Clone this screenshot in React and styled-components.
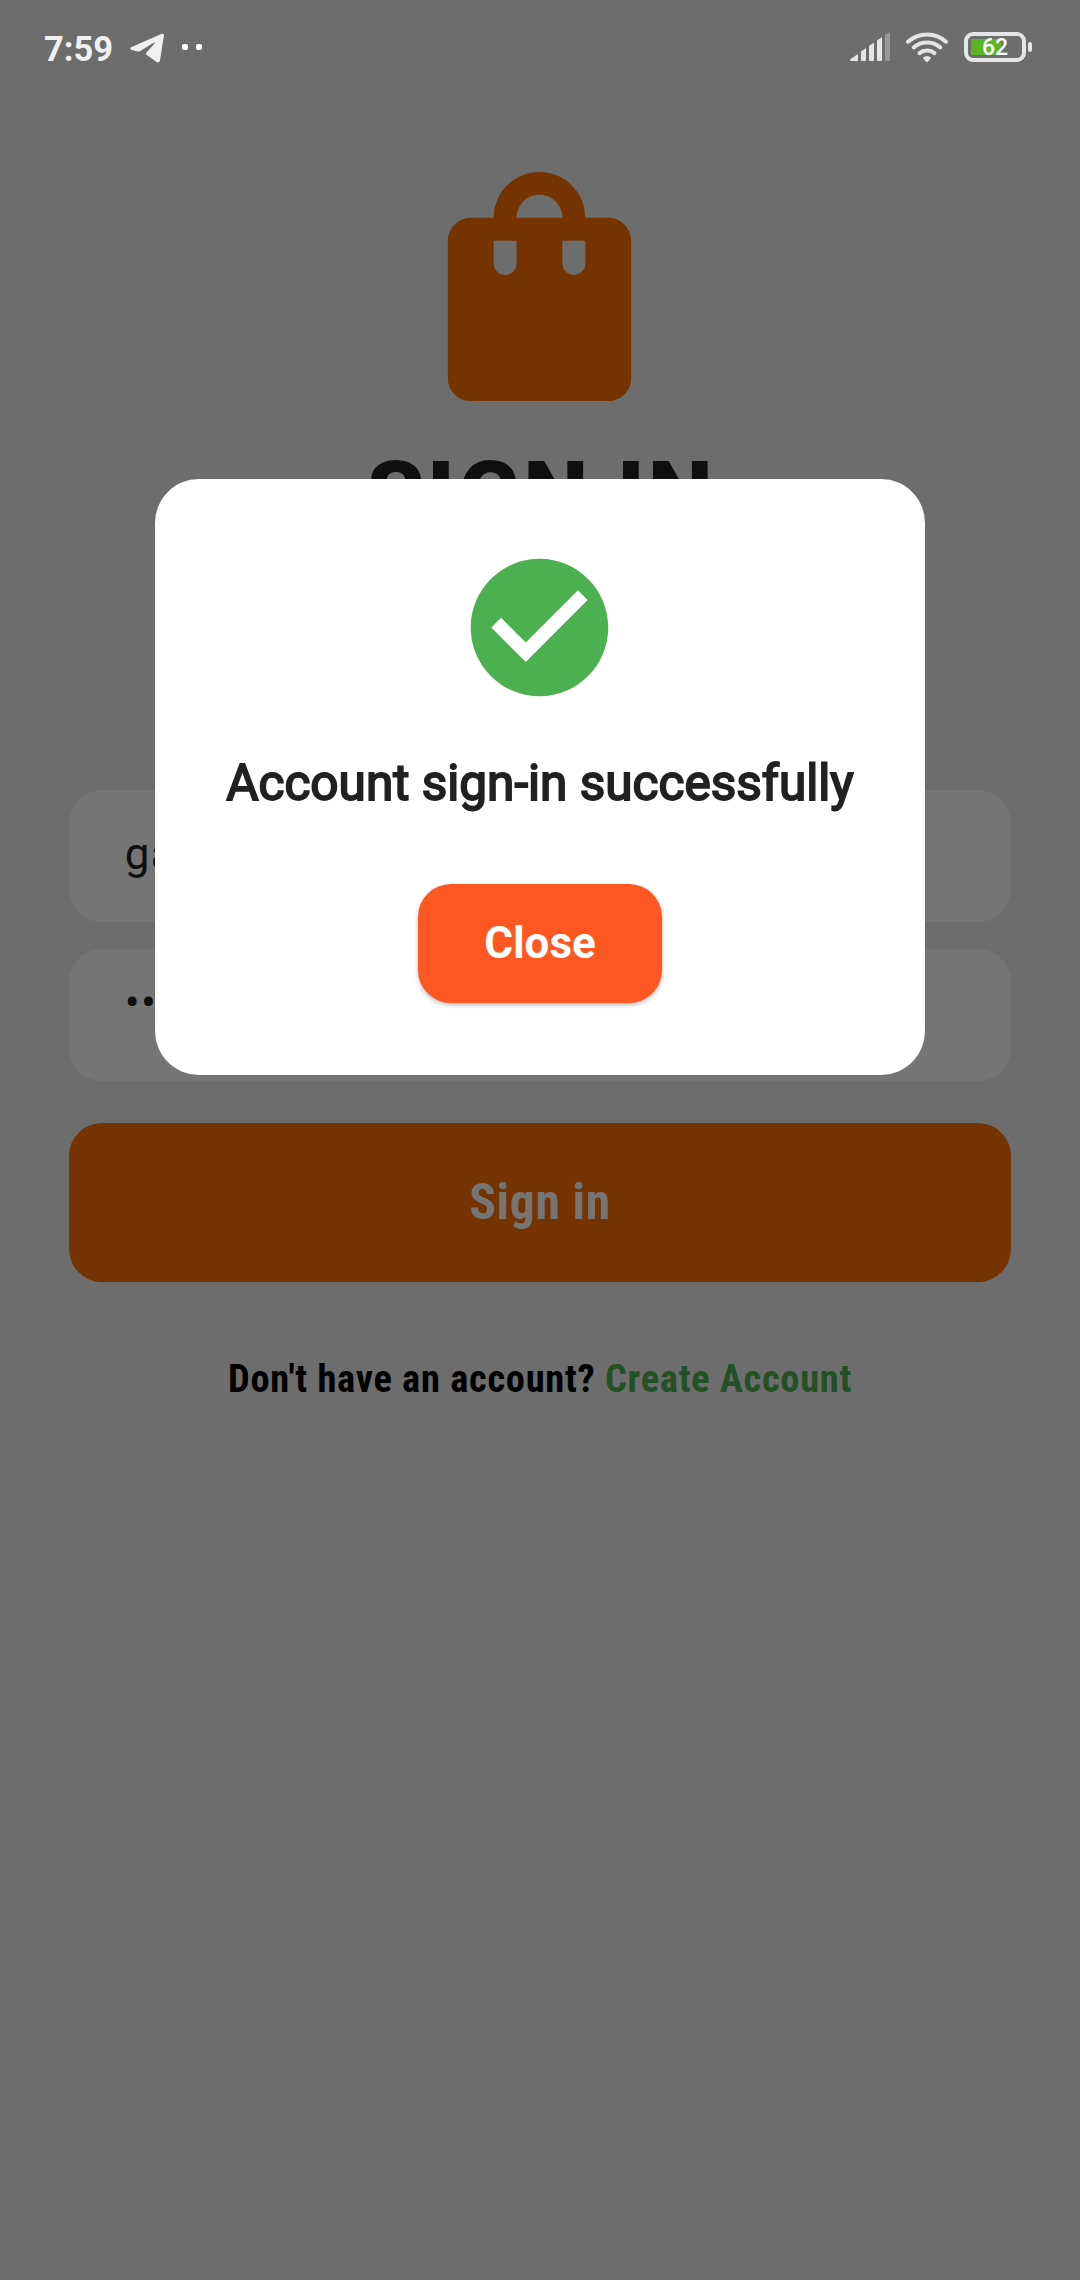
import React from "react";
import styled, { createGlobalStyle } from "styled-components";

const GlobalStyle = createGlobalStyle`
  * { box-sizing: border-box; }
  body { margin: 0; background: #6d6d6d; }
  button { font: inherit; border: 0; padding: 0; margin: 0; }
`;

const Screen = styled.div`
  position: relative;
  width: 1080px;
  height: 2280px;
  overflow: hidden;
  background: #eeeeee;
  font-family: Roboto, "Noto Sans", sans-serif;
`;

const Page = styled.main`
  display: flex;
  flex-direction: column;
  align-items: center;
  padding: 149px 68.75px 0;
`;

const BagIcon = styled.svg`
  display: block;
  width: 275px;
  height: 275px;
  margin-left: -1px;
  fill: #ff6f00;
`;

const Title = styled.h1`
  margin: 8px 0 0;
  padding-left: 2px;
  height: 128px;
  line-height: 128px;
  font-size: 92px;
  font-weight: 900;
  letter-spacing: 3px;
  color: #212121;
  white-space: nowrap;
`;

const Fields = styled.div`
  display: flex;
  flex-direction: column;
  gap: 27.5px;
  width: 100%;
  margin-top: 229.5px;
`;

const Field = styled.div`
  height: 132px;
  padding: ${(p) => p.$top}px 56px 0;
  border-radius: 33px;
  background: #ffffff;
  color: #212121;
  font-size: 44px;
  line-height: 52px;
  letter-spacing: 1.4px;
`;

const SignInButton = styled.button`
  width: 100%;
  height: 159.5px;
  margin-top: 41.5px;
  border-radius: 33px;
  background: #ff6f00;
  color: #ffffff;
  font-family: "Roboto Condensed", Roboto, sans-serif;
  font-size: 49.5px;
  font-weight: 700;
  letter-spacing: 0.7px;
`;

const Prompt = styled.p`
  margin: 72.5px 0 0;
  color: #000000;
  font-family: "Roboto Condensed", Roboto, sans-serif;
  font-size: 38.5px;
  line-height: 48px;
  font-weight: 700;
  letter-spacing: 0.7px;
  white-space: nowrap;
`;

const PromptLink = styled.span`
  color: #4caf50;
`;

const Scrim = styled.div`
  position: absolute;
  inset: 0;
  display: flex;
  flex-direction: column;
  align-items: center;
  padding-top: 478.5px;
  background: rgba(0, 0, 0, 0.54);
`;

const Dialog = styled.section`
  display: flex;
  flex-direction: column;
  align-items: center;
  width: 770px;
  height: 596.5px;
  padding-top: 66px;
  border-radius: 44px;
  background: #ffffff;
`;

const CheckIcon = styled.svg`
  display: block;
  width: 165px;
  height: 165px;
  margin-left: -1px;
  fill: #4caf50;
`;

const Message = styled.p`
  margin: 43.5px 0 0;
  height: 60px;
  line-height: 60px;
  font-size: 49.5px;
  font-weight: 400;
  -webkit-text-stroke: 1.9px #212121;
  color: #212121;
  white-space: nowrap;
`;

const CloseButton = styled.button`
  width: 244px;
  height: 118.5px;
  margin-top: 71px;
  border-radius: 33px;
  background: #ff5722;
  box-shadow: 0 2px 4px rgba(0, 0, 0, 0.28);
  color: #ffffff;
  font-size: 44px;
  font-weight: 700;
`;

const StatusBar = styled.header`
  position: absolute;
  top: 0;
  left: 0;
  display: flex;
  align-items: center;
  width: 100%;
  height: 94px;
  padding: 0 48px 0 44px;
  color: #f0f0f0;
`;

const Clock = styled.span`
  width: 86px;
  padding-top: 3px;
  font-size: 34.5px;
  line-height: 40px;
  font-weight: 700;
`;

const Telegram = styled.svg`
  display: block;
  width: 34px;
  height: 30px;
  margin-top: 2px;
  fill: #f0f0f0;
`;

const Dots = styled.div`
  display: flex;
  gap: 8px;
  margin-left: 18px;
`;

const Dot = styled.i`
  width: 6px;
  height: 6px;
  border-radius: 2px;
  background: #ffffff;
`;

const Indicators = styled.div`
  display: flex;
  align-items: center;
  gap: 16px;
  margin-left: auto;
`;

const Glyph = styled.svg`
  display: block;
  height: 30px;
  width: ${(p) => p.$w}px;
`;

const Battery = styled.div`
  display: flex;
  align-items: center;
  gap: 2px;
`;

const BatteryBody = styled.div`
  display: flex;
  align-items: center;
  justify-content: center;
  width: 62px;
  height: 30px;
  padding-top: 2px;
  border: 4px solid #e5e5e5;
  border-radius: 9px;
  background: linear-gradient(#5ab526, #5ab526) 3px 3px / 30px 16px no-repeat;
  color: #ffffff;
  font-size: 23px;
  line-height: 22px;
  font-weight: 500;
`;

const BatteryTip = styled.div`
  width: 4px;
  height: 10px;
  border-radius: 2px;
  background: #e5e5e5;
`;

export default function App() {
  return (
    <>
      <GlobalStyle />
      <Screen>
        <Page>
          <BagIcon viewBox="0 0 24 24">
            <path d="M18 6h-2c0-2.21-1.79-4-4-4S8 3.79 8 6H6c-1.1 0-2 .9-2 2v12c0 1.1.9 2 2 2h12c1.1 0 2-.9 2-2V8c0-1.1-.9-2-2-2zm-8 4c0 .55-.45 1-1 1s-1-.45-1-1V8h2v2zm2-6c1.1 0 2 .9 2 2h-4c0-1.1.9-2 2-2zm4 6c0 .55-.45 1-1 1s-1-.45-1-1V8h2v2z" />
          </BagIcon>
          <Title>SIGN IN</Title>
          <Fields>
            <Field $top={38}>ga</Field>
            <Field $top={28}>••</Field>
          </Fields>
          <SignInButton>Sign in</SignInButton>
          <Prompt>
            Don't have an account? <PromptLink>Create Account</PromptLink>
          </Prompt>
        </Page>

        <Scrim>
          <Dialog>
            <CheckIcon viewBox="0 0 24 24">
              <path d="M12 2C6.48 2 2 6.48 2 12s4.48 10 10 10 10-4.48 10-10S17.52 2 12 2zm-2 15l-5-5 1.41-1.41L10 14.17l7.59-7.59L19 8l-9 9z" />
            </CheckIcon>
            <Message>Account sign-in successfully</Message>
            <CloseButton>Close</CloseButton>
          </Dialog>
        </Scrim>

        <StatusBar>
          <Clock>7:59</Clock>
          <Telegram viewBox="0 0 34 30">
            <path d="M1.2 14.2L31.2 1.1C33 .4 34.2 1.2 33.9 3L30 27.2C29.7 29.4 28 30 26.3 28.8L16.8 22.1C15.5 21.2 15.5 20.5 16.5 19.4L24.600 10.6C25.2 9.7 24.5 9.2 23.6 9.8L10.7 17.7C9.2 18.6 8 18.7 6.5 18.3L1.2 16.7C-.2 16.2 0 14.8 1.2 14.2Z" />
          </Telegram>
          <Dots>
            <Dot />
            <Dot />
          </Dots>
          <Indicators>
            <Glyph $w={40} viewBox="0 0 40 30" fill="#e5e5e5">
              <path d="M0 27.5L8 22V29H1.5Q0 29 0 27.5Z" />
              <path d="M11 19.5L16 16V28Q16 29 15 29H12Q11 29 11 28Z" />
              <path d="M19 14L24 10.500V28Q24 29 23 29H20Q19 29 19 28Z" />
              <path d="M27 8.5L32 5V28Q32 29 31 29H28Q27 29 27 28Z" />
              <path d="M35 3L40 0V28Q40 29 39 29H36Q35 29 35 28Z" fill="#999999" />
            </Glyph>
            <Glyph
              $w={42}
              viewBox="0 0 42 30"
              fill="none"
              stroke="#e5e5e5"
              strokeWidth="4"
              strokeLinecap="round"
            >
              <path d="M2 9.700A28.500 28.500 0 0 1 40 9.700" />
              <path d="M7.800 15.400A20.500 20.500 0 0 1 34.200 15.400" />
              <path d="M13.500 21.100A12 12 0 0 1 28.500 21.100" />
              <path
                d="M17 25.500Q21 22.500 25 25.500Q24.500 27.500 21.700 29.700Q21 30.200 20.300 29.700Q17.500 27.500 17 25.500Z"
                fill="#e5e5e5"
                stroke="none"
              />
            </Glyph>
            <Battery>
              <BatteryBody>62</BatteryBody>
              <BatteryTip />
            </Battery>
          </Indicators>
        </StatusBar>
      </Screen>
    </>
  );
}
